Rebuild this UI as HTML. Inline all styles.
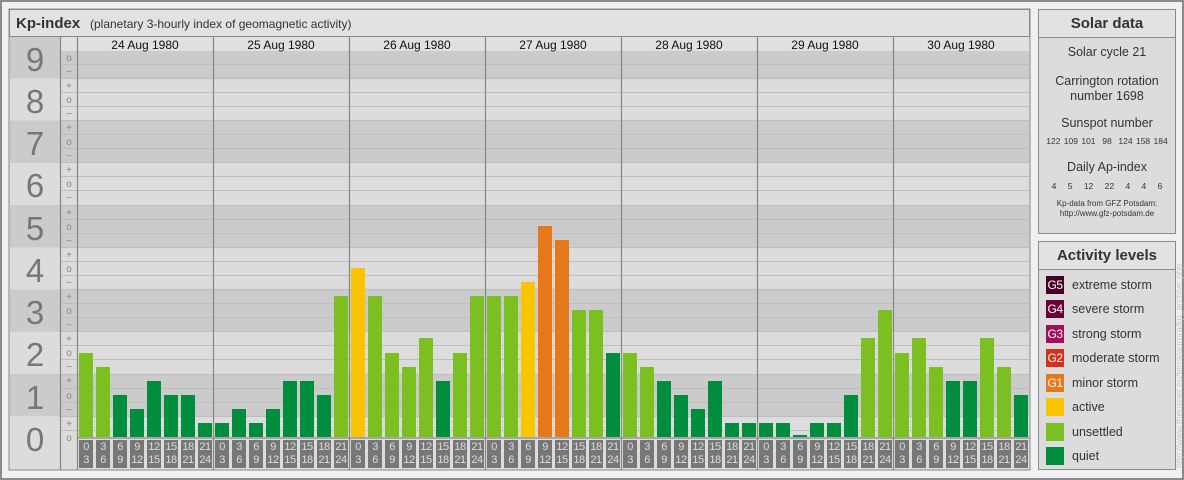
<!DOCTYPE html>
<html><head><meta charset="utf-8"><style>
*{margin:0;padding:0;box-sizing:border-box}
body{width:1184px;height:480px;background:#f0f0f0;position:relative;overflow:hidden;font-family:"Liberation Sans",sans-serif}
.abs{position:absolute}
#bars{position:absolute;left:77px;top:51px;height:386px;display:flex;align-items:flex-end}
#bars div{width:14px;margin:0 3px 0 0;}
#bars div:first-child{margin-left:2px}
.q{background:#008e3e}.u{background:#7bc020}.a{background:#f9c400}.g1{background:#e57818}
#labs{position:absolute;left:79px;top:440px;display:flex}
#labs div{width:14px;height:28px;margin-right:3px;background:#777;color:#ddd;font-size:11px;line-height:13px;text-align:center;padding-top:1px;letter-spacing:-0.5px}
.rp{position:absolute;left:1038px;width:138px;border:1px solid #8a8a8a;background:#dcdcdc;text-align:center;color:#333}
.rp .t{height:28px;border-bottom:1px solid #8a8a8a;background:#e2e2e2;font-weight:bold;font-size:15px;line-height:28px;color:#333}
.it{position:absolute;left:7px;height:18px;font-size:12.5px;line-height:18px;color:#333;text-align:left}
.it span{display:inline-block;width:18px;height:18px;vertical-align:top;color:#fff;font-size:12px;text-align:center;margin-right:8px;letter-spacing:-0.5px}
</style></head><body>
<svg class="abs" style="left:0;top:0" width="1184" height="480">
<rect x="1" y="1" width="1182" height="478" fill="none" stroke="#8a8a8a" stroke-width="2"/>
<rect x="9" y="9" width="1021" height="461" fill="#dcdcdc" stroke="#8a8a8a"/>
<rect x="9.5" y="9.5" width="1020" height="27" fill="#e2e2e2" stroke="#8a8a8a"/>
<text x="16" y="28" font-size="15" font-weight="bold" fill="#333">Kp-index</text>
<text x="90" y="28" font-size="12" fill="#333">(planetary 3-hourly index of geomagnetic activity)</text>
<g fill="#cbcbcb">
<rect x="10" y="37" width="1019" height="41.5"/>
<rect x="10" y="120.7" width="1019" height="42.2"/>
<rect x="10" y="205.1" width="1019" height="42.2"/>
<rect x="10" y="289.6" width="1019" height="42.2"/>
<rect x="10" y="374" width="1019" height="42.2"/>
</g>
<rect x="61" y="37" width="968" height="14" fill="#e0e0e0"/>
<g stroke="#bdbdbd" stroke-width="1">
<line x1="61" x2="1029" y1="430.5" y2="430.5"/><line x1="61" x2="1029" y1="416.5" y2="416.5"/><line x1="61" x2="1029" y1="402.5" y2="402.5"/><line x1="61" x2="1029" y1="388.5" y2="388.5"/><line x1="61" x2="1029" y1="374.5" y2="374.5"/><line x1="61" x2="1029" y1="359.5" y2="359.5"/><line x1="61" x2="1029" y1="345.5" y2="345.5"/><line x1="61" x2="1029" y1="331.5" y2="331.5"/><line x1="61" x2="1029" y1="317.5" y2="317.5"/><line x1="61" x2="1029" y1="303.5" y2="303.5"/><line x1="61" x2="1029" y1="289.5" y2="289.5"/><line x1="61" x2="1029" y1="275.5" y2="275.5"/><line x1="61" x2="1029" y1="261.5" y2="261.5"/><line x1="61" x2="1029" y1="247.5" y2="247.5"/><line x1="61" x2="1029" y1="233.5" y2="233.5"/><line x1="61" x2="1029" y1="219.5" y2="219.5"/><line x1="61" x2="1029" y1="205.5" y2="205.5"/><line x1="61" x2="1029" y1="190.5" y2="190.5"/><line x1="61" x2="1029" y1="176.5" y2="176.5"/><line x1="61" x2="1029" y1="162.5" y2="162.5"/><line x1="61" x2="1029" y1="148.5" y2="148.5"/><line x1="61" x2="1029" y1="134.5" y2="134.5"/><line x1="61" x2="1029" y1="120.5" y2="120.5"/><line x1="61" x2="1029" y1="106.5" y2="106.5"/><line x1="61" x2="1029" y1="92.5" y2="92.5"/><line x1="61" x2="1029" y1="78.5" y2="78.5"/><line x1="61" x2="1029" y1="64.5" y2="64.5"/>
</g>
<g stroke="#858585" stroke-width="1.2">
<line x1="60.5" x2="60.5" y1="37" y2="470"/><line x1="77.5" x2="77.5" y1="37" y2="470"/>
<line x1="213.5" x2="213.5" y1="37" y2="470"/><line x1="349.5" x2="349.5" y1="37" y2="470"/><line x1="485.5" x2="485.5" y1="37" y2="470"/><line x1="621.5" x2="621.5" y1="37" y2="470"/><line x1="757.5" x2="757.5" y1="37" y2="470"/><line x1="893.5" x2="893.5" y1="37" y2="470"/>
<line x1="77" x2="1029" y1="438" y2="438"/>
</g>
<g font-size="33" fill="#777" text-anchor="middle">
<text x="35" y="71">9</text><text x="35" y="113">8</text><text x="35" y="155">7</text><text x="35" y="197">6</text><text x="35" y="240">5</text><text x="35" y="282">4</text><text x="35" y="324">3</text><text x="35" y="366">2</text><text x="35" y="409">1</text><text x="35" y="451">0</text>
</g>
<g font-size="10" fill="#888" text-anchor="middle">
<text x="69" y="61">o</text><text x="69" y="75">−</text><text x="69" y="89">+</text><text x="69" y="103">o</text><text x="69" y="117">−</text><text x="69" y="131">+</text><text x="69" y="145">o</text><text x="69" y="159">−</text><text x="69" y="173">+</text><text x="69" y="187">o</text><text x="69" y="201">−</text><text x="69" y="216">+</text><text x="69" y="230">o</text><text x="69" y="244">−</text><text x="69" y="258">+</text><text x="69" y="272">o</text><text x="69" y="286">−</text><text x="69" y="300">+</text><text x="69" y="314">o</text><text x="69" y="328">−</text><text x="69" y="342">+</text><text x="69" y="356">o</text><text x="69" y="370">−</text><text x="69" y="384">+</text><text x="69" y="399">o</text><text x="69" y="413">−</text><text x="69" y="427">+</text><text x="69" y="441">o</text>
</g>
<g font-size="12" fill="#111" text-anchor="middle">
<text x="145" y="49">24 Aug 1980</text><text x="281" y="49">25 Aug 1980</text><text x="417" y="49">26 Aug 1980</text><text x="553" y="49">27 Aug 1980</text><text x="689" y="49">28 Aug 1980</text><text x="825" y="49">29 Aug 1980</text><text x="961" y="49">30 Aug 1980</text>
</g>
<text transform="translate(1182,468) rotate(-90)" font-size="9" fill="#c8c8c8">http://www.theusner.eu/terra/aurora/kp_archive.php</text>
</svg>
<div id="bars">
<div class="u" style="height:84px"></div><div class="u" style="height:70px"></div><div class="q" style="height:42px"></div><div class="q" style="height:28px"></div><div class="q" style="height:56px"></div><div class="q" style="height:42px"></div><div class="q" style="height:42px"></div><div class="q" style="height:14px"></div>
<div class="q" style="height:14px"></div><div class="q" style="height:28px"></div><div class="q" style="height:14px"></div><div class="q" style="height:28px"></div><div class="q" style="height:56px"></div><div class="q" style="height:56px"></div><div class="q" style="height:42px"></div><div class="u" style="height:141px"></div>
<div class="a" style="height:169px"></div><div class="u" style="height:141px"></div><div class="u" style="height:84px"></div><div class="u" style="height:70px"></div><div class="u" style="height:99px"></div><div class="q" style="height:56px"></div><div class="u" style="height:84px"></div><div class="u" style="height:141px"></div>
<div class="u" style="height:141px"></div><div class="u" style="height:141px"></div><div class="a" style="height:155px"></div><div class="g1" style="height:211px"></div><div class="g1" style="height:197px"></div><div class="u" style="height:127px"></div><div class="u" style="height:127px"></div><div class="q" style="height:84px"></div>
<div class="u" style="height:84px"></div><div class="u" style="height:70px"></div><div class="q" style="height:56px"></div><div class="q" style="height:42px"></div><div class="q" style="height:28px"></div><div class="q" style="height:56px"></div><div class="q" style="height:14px"></div><div class="q" style="height:14px"></div>
<div class="q" style="height:14px"></div><div class="q" style="height:14px"></div><div class="q" style="height:2px"></div><div class="q" style="height:14px"></div><div class="q" style="height:14px"></div><div class="q" style="height:42px"></div><div class="u" style="height:99px"></div><div class="u" style="height:127px"></div>
<div class="u" style="height:84px"></div><div class="u" style="height:99px"></div><div class="u" style="height:70px"></div><div class="q" style="height:56px"></div><div class="q" style="height:56px"></div><div class="u" style="height:99px"></div><div class="u" style="height:70px"></div><div class="q" style="height:42px"></div>
</div>
<div id="labs">
<div>0<br>3</div><div>3<br>6</div><div>6<br>9</div><div>9<br>12</div><div>12<br>15</div><div>15<br>18</div><div>18<br>21</div><div>21<br>24</div>
<div>0<br>3</div><div>3<br>6</div><div>6<br>9</div><div>9<br>12</div><div>12<br>15</div><div>15<br>18</div><div>18<br>21</div><div>21<br>24</div>
<div>0<br>3</div><div>3<br>6</div><div>6<br>9</div><div>9<br>12</div><div>12<br>15</div><div>15<br>18</div><div>18<br>21</div><div>21<br>24</div>
<div>0<br>3</div><div>3<br>6</div><div>6<br>9</div><div>9<br>12</div><div>12<br>15</div><div>15<br>18</div><div>18<br>21</div><div>21<br>24</div>
<div>0<br>3</div><div>3<br>6</div><div>6<br>9</div><div>9<br>12</div><div>12<br>15</div><div>15<br>18</div><div>18<br>21</div><div>21<br>24</div>
<div>0<br>3</div><div>3<br>6</div><div>6<br>9</div><div>9<br>12</div><div>12<br>15</div><div>15<br>18</div><div>18<br>21</div><div>21<br>24</div>
<div>0<br>3</div><div>3<br>6</div><div>6<br>9</div><div>9<br>12</div><div>12<br>15</div><div>15<br>18</div><div>18<br>21</div><div>21<br>24</div>
</div>
<div class="rp" style="top:9px;height:225px">
<div class="t">Solar data</div>
<div style="font-size:12.5px;margin-top:7px;line-height:14px">Solar cycle 21</div>
<div style="font-size:12.5px;margin-top:15px;line-height:15px">Carrington rotation<br>number 1698</div>
<div style="font-size:12.5px;margin-top:12px;line-height:14px">Sunspot number</div>
<div style="font-size:8.5px;margin-top:6px;line-height:10px;word-spacing:1px">122 109 101 &nbsp;98 &nbsp;124 158 184</div>
<div style="font-size:12.5px;margin-top:14px;line-height:14px">Daily Ap-index</div>
<div style="font-size:8.5px;margin-top:7px;line-height:10px;word-spacing:9px">4 5 12 22 4 4 6</div>
<div style="font-size:8px;margin-top:8px;line-height:10px">Kp-data from GFZ Potsdam:<br>http://www.gfz-potsdam.de</div>
</div>
<div class="rp" style="top:241px;height:229px">
<div class="t">Activity levels</div>
<div class="it" style="top:34px"><span style="background:#4a0026">G5</span>extreme storm</div>
<div class="it" style="top:58px"><span style="background:#6b0038">G4</span>severe storm</div>
<div class="it" style="top:83px"><span style="background:#a0105a">G3</span>strong storm</div>
<div class="it" style="top:107px"><span style="background:#d4301c">G2</span>moderate storm</div>
<div class="it" style="top:132px"><span style="background:#e57818">G1</span>minor storm</div>
<div class="it" style="top:156px"><span style="background:#f9c400"></span>active</div>
<div class="it" style="top:181px"><span style="background:#7bc020"></span>unsettled</div>
<div class="it" style="top:205px"><span style="background:#008e3e"></span>quiet</div>
</div>
</body></html>
